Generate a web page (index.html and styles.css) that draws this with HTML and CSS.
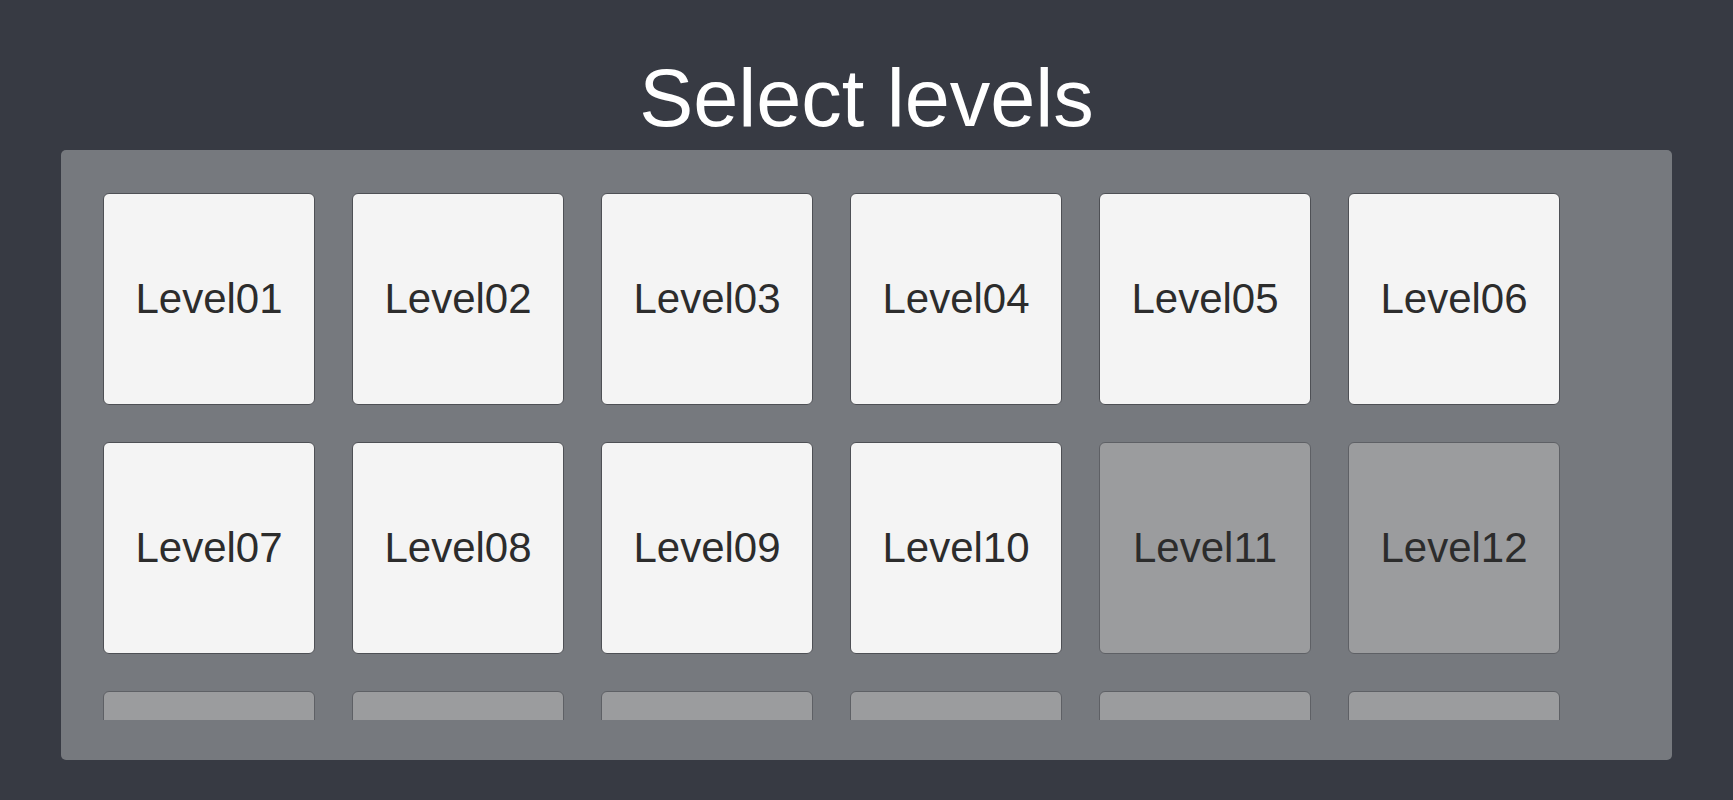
FILE: index.html
```html
<!DOCTYPE html>
<html lang="en">
<head>
<meta charset="utf-8">
<title>Select levels</title>
<link rel="stylesheet" href="styles.css">
</head>
<body>
<h1 class="title">Select levels</h1>
<div class="panel">
  <div class="viewport">
    <div class="grid">
      <button class="tile">Level01</button>
      <button class="tile">Level02</button>
      <button class="tile">Level03</button>
      <button class="tile">Level04</button>
      <button class="tile">Level05</button>
      <button class="tile">Level06</button>
      <button class="tile">Level07</button>
      <button class="tile">Level08</button>
      <button class="tile">Level09</button>
      <button class="tile">Level10</button>
      <button class="tile locked">Level11</button>
      <button class="tile locked">Level12</button>
      <button class="tile locked">Level13</button>
      <button class="tile locked">Level14</button>
      <button class="tile locked">Level15</button>
      <button class="tile locked">Level16</button>
      <button class="tile locked">Level17</button>
      <button class="tile locked">Level18</button>
    </div>
  </div>
</div>
</body>
</html>
```
FILE: styles.css
```css
html, body {
  margin: 0;
  padding: 0;
}
body {
  width: 1733px;
  height: 800px;
  background: #373a43;
  font-family: "Liberation Sans", Arial, sans-serif;
  overflow: hidden;
}
.title {
  margin: 0;
  padding-top: 58px;
  height: 81px;
  margin-bottom: 11px;
  font-size: 81px;
  line-height: 81px;
  font-weight: 400;
  color: #ffffff;
  text-align: center;
}
.panel {
  margin: 0 61px;
  height: 610px;
  box-sizing: border-box;
  padding: 43px 42px 40px;
  background: #76797e;
  border-radius: 5px;
}
.viewport {
  height: 527px;
  overflow: hidden;
}
.grid {
  display: grid;
  grid-template-columns: repeat(6, 212px);
  grid-auto-rows: 212px;
  gap: 37px;
}
.tile {
  box-sizing: border-box;
  margin: 0;
  padding: 0;
  background: #f4f4f4;
  border: 1px solid #4e5055;
  border-radius: 6px;
  font-family: "Liberation Sans", Arial, sans-serif;
  font-size: 42px;
  color: #2c2c2c;
  display: flex;
  align-items: center;
  justify-content: center;
}
.tile.locked {
  background: #9b9c9e;
  border-color: #5e6065;
}
```
